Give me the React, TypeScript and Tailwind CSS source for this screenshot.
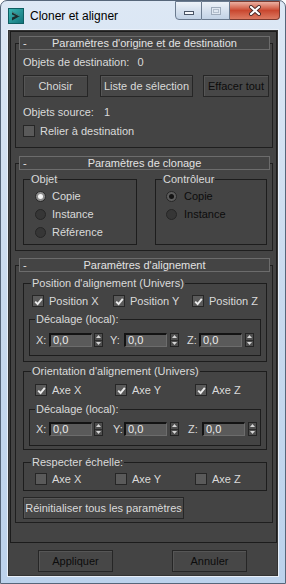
import React from "react";

const dim = "text-[#0c0c0c]";

function CheckBox({ checked }: { checked?: boolean }) {
  return (
    <span className="w-[12px] h-[12px] shrink-0 border border-[#262626] bg-[#5a5a5a] flex items-center justify-center">
      {checked && (
        <svg width="9" height="9" viewBox="0 0 9 9">
          <path d="M1.2 4.6 L3.6 7 L7.8 1.8" stroke="#ececec" strokeWidth="1.9" fill="none" />
        </svg>
      )}
    </span>
  );
}

function Radio({ on, disabled }: { on?: boolean; disabled?: boolean }) {
  const ring = on ? (disabled ? "bg-[#5c5c5c]" : "bg-[#8a8a8a]") : "bg-[#363636]";
  return (
    <span className={`w-[11px] h-[11px] shrink-0 rounded-full border border-[#262626] ${ring} flex items-center justify-center`}>
      {on && <span className={`w-[5px] h-[5px] rounded-full ${disabled ? "bg-[#141414]" : "bg-[#f4f4f4]"}`} />}
    </span>
  );
}

function Btn({ children, className = "" }: { children: React.ReactNode; className?: string }) {
  return (
    <div className={`h-[22px] flex items-center justify-center border border-[#262626] bg-[#474747] shadow-[inset_1px_1px_0_#565656] ${className}`}>
      {children}
    </div>
  );
}

function Header({ title }: { title: string }) {
  return (
    <div className="-mt-[8px] ml-[3px] mr-[2px] h-[14px] border border-[#6c6c6c] bg-[#444444] flex items-center leading-[12px] text-[#e2e2e2]">
      <span className="w-[12px] pl-[3px]">-</span>
      <span className="flex-1 text-center">{title}</span>
      <span className="w-[12px]" />
    </div>
  );
}

function Spinner({ className = "" }: { className?: string }) {
  return (
    <span className={`w-[9px] h-[14px] border border-[#242424] bg-[#4e4e4e] flex flex-col ${className}`}>
      <span className="flex-1 flex items-center justify-center border-b border-[#2c2c2c]">
        <svg width="5" height="3" viewBox="0 0 5 3">
          <path d="M0 3 L2.5 0 L5 3Z" fill="#d6d6d6" />
        </svg>
      </span>
      <span className="flex-1 flex items-center justify-center">
        <svg width="5" height="3" viewBox="0 0 5 3">
          <path d="M0 0 L2.5 3 L5 0Z" fill="#d6d6d6" />
        </svg>
      </span>
    </span>
  );
}

function Num() {
  return (
    <span className="w-[43px] h-[14px] bg-[#5a5a5a] border-t-2 border-l-2 border-r border-b border-t-[#131313] border-l-[#131313] border-r-[#6c6c6c] border-b-[#6c6c6c] pl-[2px] leading-[10px] text-[#ececec]">
      0,0
    </span>
  );
}

function Offset({ alt }: { alt?: boolean }) {
  return (
    <fieldset className={`ml-[5px] mr-[5px] border border-[#1d1d1d] ${alt ? "mt-[5px] pb-[9px]" : "mt-[4px] pb-[8px]"}`}>
      <legend className="ml-[5px] px-[1px] h-[14px] leading-[14px]">Décalage (local):</legend>
      <div className={`${alt ? "mt-[6px]" : "mt-[7px]"} pl-[6px] flex items-center h-[14px]`}>
        <span className="w-[13px]">X:</span>
        <Num />
        <Spinner className="ml-[2px]" />
        <span className={alt ? "ml-[10px] w-[11px]" : "ml-[7px] w-[14px]"}>Y:</span>
        <Num />
        <Spinner className="ml-[3px]" />
        <span className={alt ? "ml-[9px] w-[14px]" : "ml-[8px] w-[12px]"}>Z:</span>
        <Num />
        <Spinner className="ml-[3px]" />
      </div>
    </fieldset>
  );
}

function CheckRow({ labels, checked, wide }: { labels: string[]; checked?: boolean; wide?: boolean }) {
  return (
    <div className={`flex items-center h-[14px] ${wide ? "pl-[8px]" : "pl-[11px]"}`}>
      {labels.map((l, i) => (
        <div key={l} className={`flex items-center gap-[5px] ${i === 0 ? (wide ? "w-[81px]" : "w-[80px]") : i === 1 ? (wide ? "w-[79px]" : "w-[80px]") : ""}`}>
          <CheckBox checked={checked} />
          <span>{l}</span>
        </div>
      ))}
    </div>
  );
}

function WinButtons() {
  return (
    <div className="ml-auto mr-[5px] flex h-[19px]">
      <div className="w-[27px] border border-[#6b7b8f] rounded-bl-[4px] bg-gradient-to-b from-[#eef3f9] via-[#d6e1ee] to-[#c2d2e5] flex items-center justify-center pt-[5px]">
        <span className="w-[10px] h-[4px] border border-[#4a5566] bg-[#f6f8fb]" />
      </div>
      <div className="w-[28px] border-y border-r border-[#6b7b8f] bg-gradient-to-b from-[#eef3f9] via-[#d6e1ee] to-[#c2d2e5] flex items-center justify-center">
        <span className="w-[10px] h-[8px] border border-[#9eabbb] bg-[#dfe7f1] flex items-center justify-center">
          <span className="w-[6px] h-[4px] border border-[#b3bfcd]" />
        </span>
      </div>
      <div className="w-[50px] border-y border-r border-[#7d3b30] rounded-br-[4px] bg-gradient-to-b from-[#eab0a2] via-[#c9472f] to-[#dc7a62] flex items-center justify-center">
        <svg width="14" height="11" viewBox="0 0 14 11">
          <path d="M3 2 L11 9 M11 2 L3 9" stroke="#4b2a28" strokeWidth="4" strokeLinecap="round" />
          <path d="M3 2 L11 9 M11 2 L3 9" stroke="#ffffff" strokeWidth="2.2" strokeLinecap="round" />
        </svg>
      </div>
    </div>
  );
}

function MaxIcon() {
  return (
    <svg width="16" height="16" viewBox="0 0 16 16">
      <defs>
        <linearGradient id="tl" x1="0" y1="0" x2="1" y2="1">
          <stop offset="0" stopColor="#3fb7b4" />
          <stop offset="1" stopColor="#10727a" />
        </linearGradient>
      </defs>
      <rect x="0.5" y="0.5" width="15" height="15" fill="url(#tl)" stroke="#0e5e62" />
      <path d="M4 3.5 L12 8 L4 12.5 L4 9.6 L7.6 8 L4 6.4 Z" fill="#1d2c2e" />
      <path d="M4 3.5 L12 8 L10.6 8 L4 4.6 Z" fill="#6fd0cc" opacity="0.6" />
    </svg>
  );
}

export default function App() {
  return (
    <div className="w-[286px] h-[584px] flex flex-col border border-[#56667a] rounded-t-[7px] overflow-hidden bg-gradient-to-b from-[#dde8f5] via-[#c9daee] to-[#bcd2ec] font-['Liberation_Sans',Arial,sans-serif] text-[11px]">
      <div className="h-[29px] flex items-start shrink-0">
        <div className="mt-[7px] ml-[7px] flex items-center h-[16px]">
          <MaxIcon />
          <span className="ml-[6px] text-[12px] leading-[16px] text-black">Cloner et aligner</span>
        </div>
        <WinButtons />
      </div>

      <div className="flex-1 mx-[7px] mb-[7px] border border-[#343434] shadow-[0_0_0_1px_#e9f0f9] bg-[#444444] text-[#dadada] flex flex-col">
        <div className="ml-[1px] h-[512px] border border-[#1c1c1c] flex flex-col">
          {/* Rollout 1 */}
          <div className="mt-[11px] ml-[4px] mr-[3px] border border-[#1f1f1f] pb-[9px]">
            <Header title="Paramètres d'origine et de destination" />
            <div className="mt-[5px] h-[14px] leading-[14px] pl-[7px]">
              Objets de destination:<span className="ml-[8px]">0</span>
            </div>
            <div className="mt-[6px] pl-[7px] flex">
              <Btn className="w-[65px]">Choisir</Btn>
              <Btn className="ml-[12px] w-[93px]">Liste de sélection</Btn>
              <Btn className={`ml-[10px] w-[66px] ${dim}`}>Effacer tout</Btn>
            </div>
            <div className="mt-[8px] h-[14px] leading-[14px] pl-[7px]">
              Objets source:<span className="ml-[10px]">1</span>
            </div>
            <div className="mt-[5px] h-[14px] pl-[7px] flex items-center gap-[5px]">
              <CheckBox />
              <span>Relier à destination</span>
            </div>
          </div>

          {/* Rollout 2 */}
          <div className="mt-[15px] ml-[4px] mr-[3px] border border-[#1f1f1f] pb-[5px]">
            <Header title="Paramètres de clonage" />
            <div className="mt-[2px] ml-[7px] flex">
              <fieldset className="w-[114px] border border-[#1d1d1d] pt-[1px] pb-[3px] pl-[11px]">
                <legend className="-ml-[5px] px-[1px] h-[14px] leading-[14px]">Objet</legend>
                <div className="h-[18px] flex items-center gap-[6px]">
                  <Radio on />
                  <span>Copie</span>
                </div>
                <div className="h-[18px] flex items-center gap-[6px]">
                  <Radio />
                  <span>Instance</span>
                </div>
                <div className="h-[18px] flex items-center gap-[6px]">
                  <Radio />
                  <span>Référence</span>
                </div>
              </fieldset>
              <fieldset className="ml-[18px] w-[112px] border border-[#1d1d1d] pt-[1px] pb-[3px] pl-[10px]">
                <legend className="-ml-[4px] px-[1px] h-[14px] leading-[14px]">Contrôleur</legend>
                <div className={`h-[18px] flex items-center gap-[7px] ${dim}`}>
                  <Radio on disabled />
                  <span>Copie</span>
                </div>
                <div className={`h-[18px] flex items-center gap-[7px] ${dim}`}>
                  <Radio />
                  <span>Instance</span>
                </div>
              </fieldset>
            </div>
          </div>

          {/* Rollout 3 */}
          <div className="mt-[14px] ml-[4px] mr-[3px] border border-[#1f1f1f] pb-[3px]">
            <Header title="Paramètres d'alignement" />
            <fieldset className="mt-[4px] ml-[7px] mr-[5px] border border-[#1d1d1d] pb-[5px]">
              <legend className="ml-[7px] px-[1px] h-[14px] leading-[14px]">Position d'alignement (Univers)</legend>
              <div className="mt-[4px]">
                <CheckRow labels={["Position X", "Position Y", "Position Z"]} checked wide />
              </div>
              <Offset />
            </fieldset>
            <fieldset className="mt-[2px] ml-[7px] mr-[5px] border border-[#1d1d1d] pb-[3px]">
              <legend className="ml-[7px] px-[1px] h-[14px] leading-[14px]">Orientation d'alignement (Univers)</legend>
              <div className="mt-[5px]">
                <CheckRow labels={["Axe X", "Axe Y", "Axe Z"]} checked />
              </div>
              <Offset alt />
            </fieldset>
            <fieldset className="mt-[5px] ml-[7px] mr-[5px] border border-[#1d1d1d] pb-[4px]">
              <legend className="ml-[7px] px-[1px] h-[14px] leading-[14px]">Respecter échelle:</legend>
              <div className="mt-[3px]">
                <CheckRow labels={["Axe X", "Axe Y", "Axe Z"]} />
              </div>
            </fieldset>
            <Btn className="mt-[6px] ml-[7px] w-[161px] h-[21px]">Réinitialiser tous les paramètres</Btn>
          </div>
        </div>

        <div className="mt-[7px] flex">
          <Btn className={`ml-[29px] w-[75px] ${dim}`}>Appliquer</Btn>
          <Btn className={`ml-[59px] w-[75px] ${dim}`}>Annuler</Btn>
        </div>
      </div>
    </div>
  );
}
